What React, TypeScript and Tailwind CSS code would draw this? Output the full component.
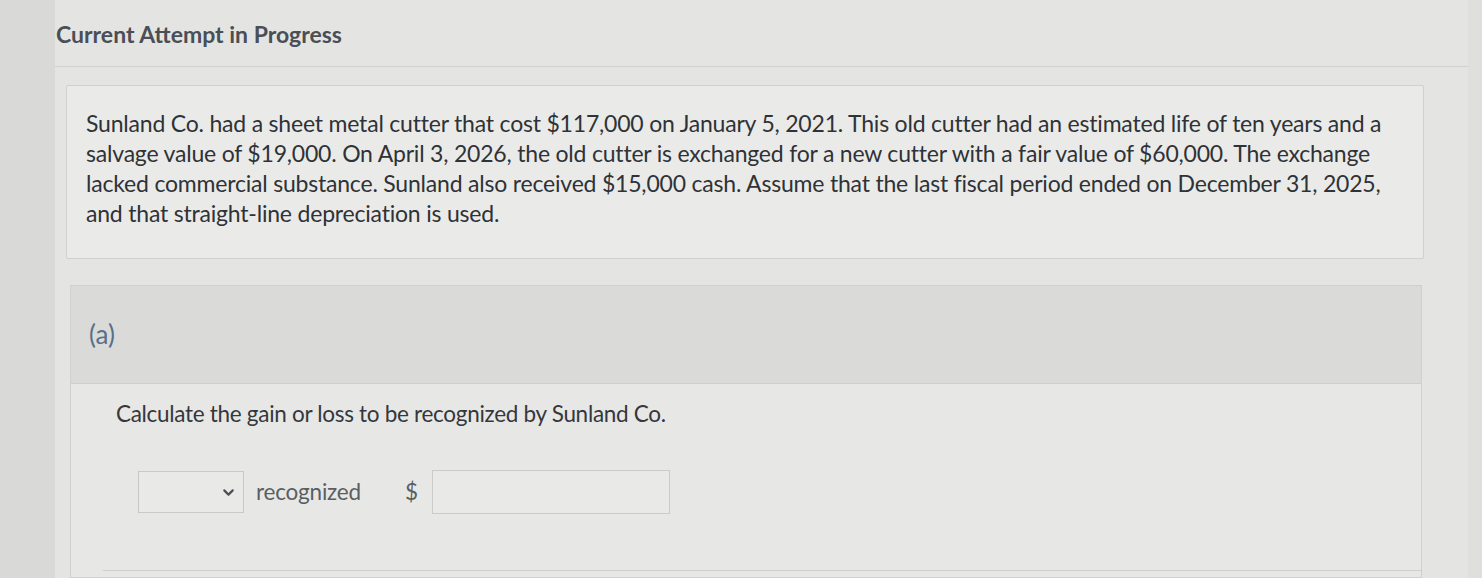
import { ChevronDown } from "lucide-react";

export default function App() {
  return (
    <div className="flex h-[578px] w-full overflow-hidden bg-[#e4e5e3] font-['Lato',sans-serif] text-[#2f3236]">
      <div className="w-[55px] shrink-0 bg-[#d9dad8]" />

      <div className="flex flex-1 flex-col">
        <h1 className="pl-[1px] pt-[20px] text-[23px] font-bold leading-[28px] tracking-[0px] text-[#4a4e55]">
          Current Attempt in Progress
        </h1>
        <div className="mt-[18px] border-t border-[#d2d3d1]" />

        <div className="ml-[11px] mt-[18px] h-[174px] w-[1358px] rounded-[2px] border border-[#d0d1cf] bg-[#eaebe9] pl-[19px] pt-[22px] text-[23px] leading-[30px] tracking-[-0.2px]">
          Sunland Co. had a sheet metal cutter that cost $117,000 on January 5, 2021. This old cutter had an estimated life of ten years and a
          <br />
          salvage value of $19,000. On April 3, 2026, the old cutter is exchanged for a new cutter with a fair value of $60,000. The exchange
          <br />
          lacked commercial substance. Sunland also received $15,000 cash. Assume that the last fiscal period ended on December 31, 2025,
          <br />
          and that straight-line depreciation is used.
        </div>

        <div className="ml-[15px] mt-[26px] flex w-[1352px] flex-1 flex-col border border-[#d0d1cf]">
          <div className="flex h-[98px] items-center border-b border-[#cfd0ce] bg-[#dadbd9] pl-[18px]">
            <span className="text-[26px] text-[#56708a]">(a)</span>
          </div>
          <div className="flex-1 bg-[#e7e8e6] pl-[45px] pt-[16px]">
            <p className="text-[22.5px] leading-[28px] tracking-[-0.3px] text-[#34373b]">
              Calculate the gain or loss to be recognized by Sunland Co.
            </p>
            <div className="ml-[22px] mt-[42px] flex items-center">
              <div className="flex h-[42px] w-[106px] items-center justify-end border border-[#c9cac8] bg-[#e9eae8] pr-[6px]">
                <ChevronDown className="h-[17px] w-[17px] text-[#4a4e55]" strokeWidth={3} />
              </div>
              <span className="ml-[12px] text-[22.5px] tracking-[-0.2px] text-[#5a5e63]">recognized</span>
              <span className="ml-[44px] text-[22.5px] text-[#5a5e63]">$</span>
              <div className="ml-[14px] h-[44px] w-[238px] border border-[#cbccca] bg-[#e9eae8]" />
            </div>
            <div className="ml-[-13px] mt-[56px] border-t border-[#cfd0ce]" />
          </div>
        </div>
      </div>

      <div className="w-[14px] shrink-0 bg-[#dfe0de]" />
    </div>
  );
}
